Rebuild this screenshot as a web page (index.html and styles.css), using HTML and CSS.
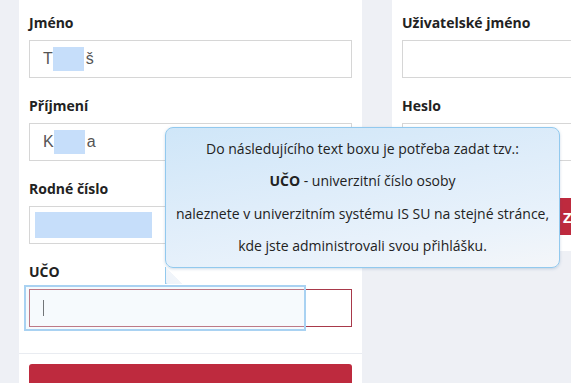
FILE: index.html
```
<!DOCTYPE html>
<html lang="cs">
<head>
  <meta charset="UTF-8" />
  <meta name="viewport" content="width=device-width, initial-scale=1.0"/>
  <title>Registrace</title>
  <link rel="stylesheet" href="styles.css">
</head>
<body>

  <div class="page">
    <form class="card card-left">
      <div class="field">
        <label for="jmeno">Jméno</label>
        <div class="input"><span>T</span><span class="redact redact-name"></span><span>š</span></div>
      </div>

      <div class="field">
        <label for="prijmeni">Příjmení</label>
        <div class="input"><span>K</span><span class="redact redact-surname"></span><span>a</span></div>
      </div>

      <div class="field">
        <label for="rc">Rodné číslo</label>
        <div class="input input-rc"><span class="redact redact-rc"></span></div>
      </div>

      <div class="field">
        <label for="uco">UČO</label>
        <div class="input input-focus"><span class="caret"></span></div>
      </div>

      <div class="form-footer">
        <button type="button" class="btn">Pokračovat v registraci přihlášky</button>
      </div>
    </form>

    <form class="card card-right">
      <div class="field">
        <label for="login">Uživatelské jméno</label>
        <div class="input"></div>
      </div>

      <div class="field">
        <label for="heslo">Heslo</label>
        <div class="input"></div>
      </div>

      <button type="button" class="btn btn-login">Zaregistrovat</button>
    </form>
  </div>

  <div class="focus-ring"></div>

  <div class="tooltip">
    <p>Do následujícího text boxu je potřeba zadat tzv.:</p>
    <p><b>UČO</b> - univerzitní číslo osoby</p>
    <p>naleznete v univerzitním systému IS SU na stejné stránce,</p>
    <p>kde jste administrovali svou přihlášku.</p>
    <span class="tail"></span>
  </div>

</body>
</html>
```

FILE: styles.css
```
body {
  margin: 0;
  background-color: #eef0f5;
  font-family: "Open Sans", "Noto Sans", sans-serif;
  color: #222;
  overflow: hidden;
}

.page {
  display: flex;
  gap: 30px;
  padding-left: 19px;
  width: 900px;
}

.card {
  background: white;
  width: 343px;
  padding: 13px 10px 0;
  box-sizing: border-box;
}

.card-left {
  height: 400px;
}

.card-right {
  align-self: flex-start;
  padding-bottom: 16px;
}

.field {
  margin-bottom: 18px;
}

label {
  display: block;
  height: 20px;
  line-height: 20px;
  font-size: 14px;
  font-weight: bold;
  color: #222;
  margin-bottom: 7px;
}

.input {
  height: 38px;
  border: 1px solid #d6d6d6;
  box-sizing: border-box;
  display: flex;
  align-items: center;
  padding-left: 13px;
  font-family: "Liberation Sans", Arial, sans-serif;
  font-size: 16px;
  color: #555;
}

.redact {
  display: inline-block;
  background: #c6defa;
  height: 24px;
  width: 31px;
  margin: 0 2px 0 0;
}

.input-rc {
  padding-left: 5px;
}

.redact-rc {
  width: 117px;
  height: 26px;
}

.input-focus {
  border-color: #a8394a;
}

.caret {
  width: 1px;
  height: 16px;
  background: #333;
}

.form-footer {
  border-top: 1px solid #e9ecf1;
  margin: 26px -10px 0;
  padding: 10px 10px 0;
}

.btn {
  display: block;
  width: 100%;
  height: 40px;
  background-color: #be2a3e;
  color: white;
  border: none;
  border-radius: 3px;
  font-family: "Open Sans", sans-serif;
  font-size: 15px;
  font-weight: bold;
  padding-top: 22px;
}

.btn-login {
  margin-top: 37px;
  height: 37px;
  padding: 0 0 0 161px;
  text-align: left;
  border-radius: 2px;
}

.focus-ring {
  position: absolute;
  left: 24px;
  top: 285px;
  width: 282px;
  height: 46px;
  box-sizing: border-box;
  border: 2px solid #a9d2f2;
  background: rgba(230, 240, 250, 0.35);
}

.tooltip {
  position: absolute;
  left: 165px;
  top: 127px;
  width: 395px;
  height: 141px;
  box-sizing: border-box;
  padding: 5px 8px 7px;
  border: 1px solid #92c9ee;
  border-radius: 8px;
  background: linear-gradient(170deg, #cfe6f8 0%, #dfedfa 45%, #e9f2fb 75%, #f4f6f9 100%);
  box-shadow: 0 1px 3px rgba(60, 110, 160, 0.25);
  text-align: center;
  font-size: 14px;
  color: #222;
}

.tooltip p {
  margin: 0;
  line-height: 32.3px;
}

.tail {
  position: absolute;
  left: -1px;
  bottom: -17px;
  width: 17px;
  height: 17px;
  background: linear-gradient(to top right, #92c9ee 0, #eef3fa 1.5px, #f1f5fa 50%, transparent 50%);
  border-left: 1px solid #92c9ee;
  box-sizing: border-box;
}
```
